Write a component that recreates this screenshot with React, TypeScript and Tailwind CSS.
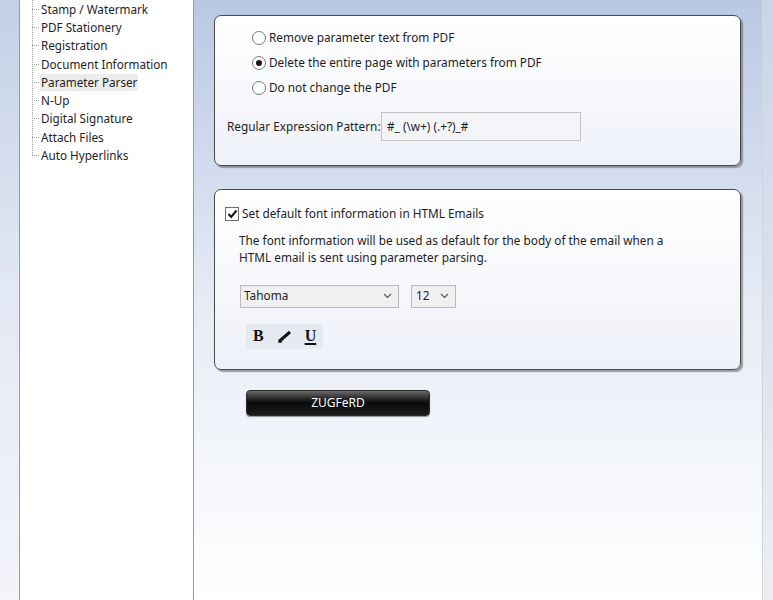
import React from "react";

const font = { fontFamily: '"Noto Sans", "Open Sans", sans-serif' };

const treeItems = [
  "Stamp / Watermark",
  "PDF Stationery",
  "Registration",
  "Document Information",
  "Parameter Parser",
  "N-Up",
  "Digital Signature",
  "Attach Files",
  "Auto Hyperlinks",
];

function Radio({ checked, label }: { checked?: boolean; label: string }) {
  return (
    <div className="flex h-[25px] items-center gap-[3px]">
      <span className="flex h-[14px] w-[14px] items-center justify-center rounded-full border border-[#7a7a7a] bg-white">
        {checked && <span className="h-[6px] w-[6px] rounded-full bg-[#1a1a1a]" />}
      </span>
      <span>{label}</span>
    </div>
  );
}

function Chevron() {
  return (
    <svg width="9" height="6" viewBox="0 0 9 6" className="shrink-0">
      <path d="M1 1 L4.5 4.5 L8 1" fill="none" stroke="#555" strokeWidth="1.2" />
    </svg>
  );
}

function Panel({ className, children }: { className: string; children: React.ReactNode }) {
  return (
    <div
      className={
        "w-[527px] rounded-[7px] border border-[#4a4a4a] bg-gradient-to-b from-white to-[#eef1f8] shadow-[2px_2px_1px_rgba(90,90,90,0.55)] " +
        className
      }
    >
      {children}
    </div>
  );
}

export default function App() {
  return (
    <div
      className="flex h-[600px] w-[773px] overflow-hidden text-[11.8px] text-[#1e1e1e]"
      style={font}
    >
      {/* left frame edge */}
      <div className="w-[19px] bg-gradient-to-b from-[#c3d0e6] via-[#e3e9f4] to-[#f3f5fa]" />

      {/* navigation tree */}
      <div className="relative w-[175px] border-x border-[#9a9a9a] bg-white text-[11.7px]">
        <div className="absolute left-[12px] top-0 h-[155px] border-l border-dotted border-[#a0a0a0]" />
        {treeItems.map((t) => (
          <div key={t} className="flex h-[18.3px] items-center">
            <span className="ml-[12px] w-[7px] border-t border-dotted border-[#a0a0a0]" />
            <span
              className={
                "ml-[1px] px-[1px] leading-[17px] " +
                (t === "Parameter Parser" ? "bg-[#ececec]" : "")
              }
            >
              {t}
            </span>
          </div>
        ))}
      </div>

      {/* settings area */}
      <div className="flex flex-1 flex-col bg-gradient-to-b from-[#b9c8e3] via-[#e6ebf5] to-white pl-[20px] pt-[15px]">
        <Panel className="h-[151px] pt-[9px]">
          <div className="pl-[37px]">
            <Radio label="Remove parameter text from PDF" />
            <Radio checked label="Delete the entire page with parameters from PDF" />
            <Radio label="Do not change the PDF" />
          </div>
          <div className="mt-[12px] flex items-center pl-[12px]">
            <span className="w-[154px] whitespace-nowrap">Regular Expression Pattern:</span>
            <div className="flex h-[29px] w-[200px] items-center border border-[#c4c4c4] bg-[#f4f5f8] pl-[5px]">
              #_ (\w+) (.+?)_#
            </div>
          </div>
        </Panel>

        <Panel className="mt-[23px] h-[181px] pt-[15px]">
          <div className="flex items-center pl-[10px]">
            <span className="flex h-[14px] w-[14px] items-center justify-center border border-[#6e6e6e] bg-white">
              <svg width="11" height="10" viewBox="0 0 11 10">
                <path d="M1.5 5 L4.2 8 L9.5 1.5" fill="none" stroke="#111" strokeWidth="2" />
              </svg>
            </span>
            <span className="ml-[3px]">Set default font information in HTML Emails</span>
          </div>
          <div className="mt-[9px] pl-[24px] leading-[17px]">
            The font information will be used as default for the body of the email when a
            <br />
            HTML email is sent using parameter parsing.
          </div>
          <div className="mt-[19px] flex items-center pl-[25px]">
            <div className="flex h-[23px] w-[159px] items-center justify-between border border-[#b9b9b9] bg-[#f0f0f0] pl-[3px] pr-[6px]">
              <span>Tahoma</span>
              <Chevron />
            </div>
            <div className="ml-[12px] flex h-[23px] w-[45px] items-center justify-between border border-[#b9b9b9] bg-[#f0f0f0] pl-[4px] pr-[6px]">
              <span>12</span>
              <Chevron />
            </div>
          </div>
          <div className="ml-[31px] mt-[16px] flex h-[25px] w-[77px] items-center gap-[13px] bg-[#e6e9ef] pl-[7px]">
            <span
              className="text-[16px] font-bold leading-none text-[#111]"
              style={{ fontFamily: '"Liberation Serif", serif' }}
            >
              B
            </span>
            <svg width="15" height="14" viewBox="0 0 15 14">
              <path d="M2 12.5 L13 3" stroke="#111" strokeWidth="3" strokeLinecap="butt" />
              <path d="M1 13 L5 13" stroke="#111" strokeWidth="1.2" />
            </svg>
            <span
              className="text-[16px] font-bold leading-none text-[#111] underline decoration-[1.5px] underline-offset-[2px]"
              style={{ fontFamily: '"Liberation Serif", serif' }}
            >
              U
            </span>
          </div>
        </Panel>

        <div className="ml-[32px] mt-[20px] flex h-[26px] w-[184px] items-center justify-center rounded-[4px] border border-[#2a2a2a] bg-gradient-to-b from-[#6a6a6a] via-[#0a0a0a] to-[#1c1c1c] text-[12px] text-white shadow-[0_1px_1px_rgba(0,0,0,0.4)]">
          ZUGFeRD
        </div>
      </div>

      {/* right frame edge */}
      <div className="w-[11px] border-l border-[#d0d4dc] bg-gradient-to-b from-[#c9d5ea] to-[#eceef2]" />
    </div>
  );
}
